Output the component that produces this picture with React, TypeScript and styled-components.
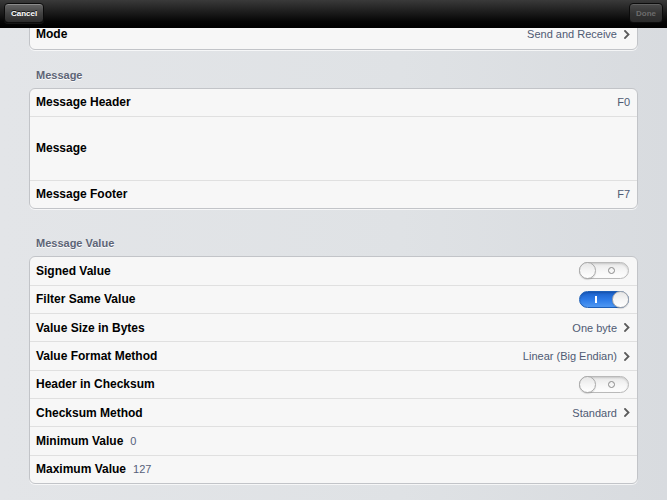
import React from "react";
import styled, { createGlobalStyle, css } from "styled-components";

const GlobalStyle = createGlobalStyle`
  html, body { margin: 0; padding: 0; }
  body {
    font-family: "Liberation Sans", Arial, Helvetica, sans-serif;
    background: #dfe1e5;
  }
`;

const Page = styled.div`
  width: 667px;
  height: 500px;
  overflow: hidden;
  display: flex;
  flex-direction: column;
  background: linear-gradient(to right, #e3e5e8 0%, #dfe2e5 60%, #d8dbdf 100%);
`;

const NavBar = styled.div`
  position: relative;
  z-index: 2;
  height: 28px;
  flex: 0 0 28px;
  display: flex;
  align-items: center;
  justify-content: space-between;
  padding: 0 4px 0 4px;
  box-sizing: border-box;
  background: linear-gradient(to bottom, #3a3a3a 0%, #1c1c1c 45%, #050505 80%, #000 100%);
  border-bottom: 1px solid #000;
`;

const NavButton = styled.button<{ $disabled?: boolean }>`
  height: 20px;
  margin-top: -1px;
  padding: 0 6px;
  border-radius: 4px;
  border: 1px solid #0c0c0c;
  font-family: "Liberation Sans", Arial, sans-serif;
  font-weight: bold;
  font-size: 8px;
  cursor: default;
  ${(p) =>
    p.$disabled
      ? css`
          min-width: 33px;
          color: #6c6c6c;
          background: linear-gradient(to bottom, #4a4a4a, #333 55%, #2a2a2a);
          box-shadow: inset 0 1px 0 rgba(255, 255, 255, 0.12);
        `
      : css`
          min-width: 40px;
          color: #fff;
          text-shadow: 0 -1px 0 rgba(0, 0, 0, 0.8);
          background: linear-gradient(to bottom, #666 0%, #444 50%, #2b2b2b 100%);
          box-shadow: inset 0 1px 0 rgba(255, 255, 255, 0.25), 0 1px 0 rgba(255, 255, 255, 0.08);
        `}
`;

const Content = styled.div`
  flex: 1;
  overflow: hidden;
  padding: 0 29px;
`;

const ScrollInner = styled.div`
  margin-top: -9px;
  display: flex;
  flex-direction: column;
`;

const Section = styled.section<{ $gap: number }>`
  margin-top: ${(p) => p.$gap}px;
  display: flex;
  flex-direction: column;
`;

const SectionTitle = styled.div`
  height: 14px;
  line-height: 14px;
  padding-left: 7px;
  margin-bottom: 5.5px;
  font-size: 11px;
  font-weight: bold;
  color: #5d6476;
  text-shadow: 0 1px 0 rgba(255, 255, 255, 0.9);
`;

const Card = styled.div`
  background: #f7f7f7;
  border: 1px solid #c2c4c8;
  border-radius: 6px;
  box-shadow: 0 1px 0 rgba(255, 255, 255, 0.7);
  display: flex;
  flex-direction: column;
  overflow: hidden;
`;

const Row = styled.div<{ $height?: number }>`
  height: ${(p) => p.$height ?? 28.3}px;
  box-sizing: border-box;
  display: flex;
  align-items: center;
  padding: 0 7px 0 6px;
  & + & {
    border-top: 1px solid #e0e0e0;
  }
`;

const Label = styled.span`
  font-size: 12px;
  font-weight: bold;
  color: #000;
  white-space: nowrap;
`;

const InlineValue = styled.span`
  margin-left: 7px;
  font-size: 11px;
  color: #56607a;
`;

const Spacer = styled.div`
  flex: 1;
`;

const Value = styled.span`
  font-size: 11px;
  color: #4f5a73;
  white-space: nowrap;
`;

const ChevronWrap = styled.span`
  display: inline-flex;
  margin-left: 7px;
  width: 6px;
  height: 9px;
`;

const Chevron = () => (
  <ChevronWrap>
    <svg width="6" height="9" viewBox="0 0 6 9">
      <path d="M1 1 L4.5 4.5 L1 8" fill="none" stroke="#5a5a5a" strokeWidth="1.8" strokeLinecap="square" />
    </svg>
  </ChevronWrap>
);

const SwitchTrack = styled.div<{ $on: boolean }>`
  position: relative;
  width: 50px;
  height: 17px;
  box-sizing: border-box;
  margin-right: 1px;
  border-radius: 9px;
  border: 1px solid ${(p) => (p.$on ? "#1d5fb8" : "#b9b9b9")};
  background: ${(p) =>
    p.$on
      ? "linear-gradient(to bottom, #1a5fc9 0%, #2f7de8 55%, #4f98f2 100%)"
      : "linear-gradient(to bottom, #e9e9e9 0%, #f8f8f8 60%, #fdfdfd 100%)"};
  box-shadow: inset 0 1px 2px rgba(0, 0, 0, 0.15);
`;

const SwitchKnob = styled.div<{ $on: boolean }>`
  position: absolute;
  top: -1px;
  ${(p) => (p.$on ? "right: -1px;" : "left: -1px;")}
  width: 17px;
  height: 17px;
  box-sizing: border-box;
  border-radius: 50%;
  border: 1px solid #a9a9a9;
  background: linear-gradient(to bottom, #e6e6e6 0%, #f5f5f5 50%, #fff 100%);
  box-shadow: 0 1px 1px rgba(0, 0, 0, 0.15);
`;

const SwitchMark = styled.div<{ $on: boolean }>`
  position: absolute;
  top: 50%;
  ${(p) =>
    p.$on
      ? css`
          left: 15px;
          width: 1.5px;
          height: 7px;
          margin-top: -3.5px;
          background: #fff;
        `
      : css`
          left: 28px;
          width: 7px;
          height: 7px;
          margin-top: -3.5px;
          box-sizing: border-box;
          border: 1.2px solid #8a8a8a;
          border-radius: 50%;
        `}
`;

const Switch = ({ on }: { on: boolean }) => (
  <SwitchTrack $on={on}>
    <SwitchMark $on={on} />
    <SwitchKnob $on={on} />
  </SwitchTrack>
);

type Item =
  | { label: string; value: string; chevron?: boolean }
  | { label: string; toggle: boolean }
  | { label: string; inline: string };

const valueRows: Item[] = [
  { label: "Signed Value", toggle: false },
  { label: "Filter Same Value", toggle: true },
  { label: "Value Size in Bytes", value: "One byte", chevron: true },
  { label: "Value Format Method", value: "Linear (Big Endian)", chevron: true },
  { label: "Header in Checksum", toggle: false },
  { label: "Checksum Method", value: "Standard", chevron: true },
  { label: "Minimum Value", inline: "0" },
  { label: "Maximum Value", inline: "127" },
];

const renderItem = (it: Item) => (
  <Row key={it.label}>
    <Label>{it.label}</Label>
    {"inline" in it && <InlineValue>{it.inline}</InlineValue>}
    <Spacer />
    {"toggle" in it && <Switch on={it.toggle} />}
    {"value" in it && <Value>{it.value}</Value>}
    {"value" in it && it.chevron && <Chevron />}
  </Row>
);

export default function App() {
  return (
    <>
      <GlobalStyle />
      <Page>
        <NavBar>
          <NavButton>Cancel</NavButton>
          <NavButton $disabled>Done</NavButton>
        </NavBar>
        <Content>
          <ScrollInner>
            <Card>
              <Row $height={28.5}>
                <Label>Mode</Label>
                <Spacer />
                <Value>Send and Receive</Value>
                <Chevron />
              </Row>
            </Card>

            <Section $gap={18.5}>
              <SectionTitle>Message</SectionTitle>
              <Card>
                <Row $height={27}>
                  <Label>Message Header</Label>
                  <Spacer />
                  <Value>F0</Value>
                </Row>
                <Row $height={64}>
                  <Label>Message</Label>
                </Row>
                <Row $height={28.5}>
                  <Label>Message Footer</Label>
                  <Spacer />
                  <Value>F7</Value>
                </Row>
              </Card>
            </Section>

            <Section $gap={27}>
              <SectionTitle>Message Value</SectionTitle>
              <Card>{valueRows.map(renderItem)}</Card>
            </Section>
          </ScrollInner>
        </Content>
      </Page>
    </>
  );
}
